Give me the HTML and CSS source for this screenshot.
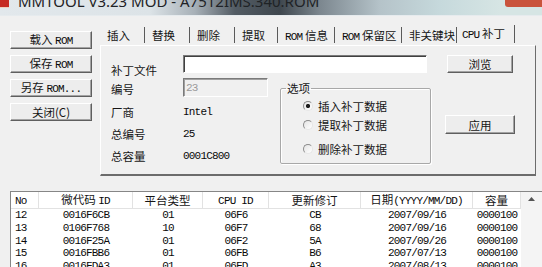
FILE: index.html
```html
<!DOCTYPE html>
<html lang="zh-CN">

<head>
    <meta charset="UTF-8">
    <title>MMTOOL V3.23 MOD - A7512IMS.340.ROM</title>
    <link rel="stylesheet" href="styles.css">
</head>

<body>

    <div class="window">
        <!-- Barra de título -->
        <div class="titlebar">
            <span class="app-icon"></span>
            <span class="title">MMTOOL V3.23 MOD - A7512IMS.340.ROM</span>
            <span class="close-btn"></span>
        </div>

        <div class="client">
            <!-- Botones de la izquierda -->
            <div class="side">
                <button class="btn">载入 <span class="mono">ROM</span></button>
                <button class="btn">保存 <span class="mono">ROM</span></button>
                <button class="btn">另存 <span class="mono">ROM...</span></button>
                <button class="btn">关闭(C)</button>
            </div>

            <!-- Pestañas -->
            <div class="tabs">
                <div class="tab-strip">
                    <div class="tab">插入</div>
                    <div class="tab">替换</div>
                    <div class="tab">删除</div>
                    <div class="tab">提取</div>
                    <div class="tab"><span class="mono">ROM</span> 信息</div>
                    <div class="tab"><span class="mono">ROM</span> 保留区</div>
                    <div class="tab">非关键块</div>
                    <div class="tab active"><span class="mono">CPU</span> 补丁</div>
                </div>

                <div class="tab-panel">
                    <div class="label label-first">补丁文件</div>
                    <input class="field field-file" type="text">
                    <button class="btn btn-browse">浏览</button>

                    <div class="label label-second">编号</div>
                    <input class="field field-num mono" type="text" value="23" disabled>

                    <fieldset class="group">
                        <legend>选项</legend>
                        <div class="radios">
                            <div class="radio"><span class="radio-dot checked"></span>插入补丁数据</div>
                            <div class="radio"><span class="radio-dot"></span>提取补丁数据</div>
                            <div class="radio radio-last"><span class="radio-dot"></span>删除补丁数据</div>
                        </div>
                    </fieldset>

                    <div class="label row-3">厂商</div>
                    <div class="value row-3 mono">Intel</div>
                    <button class="btn btn-apply">应用</button>

                    <div class="label row-4">总编号</div>
                    <div class="value row-4 mono">25</div>

                    <div class="label row-5">总容量</div>
                    <div class="value row-5 mono">0001C800</div>
                </div>
            </div>
        </div>

        <!-- Lista de microcódigos -->
        <div class="list">
            <table class="list-table">
                <colgroup>
                    <col class="c-no">
                    <col class="c-id">
                    <col class="c-plat">
                    <col class="c-cpu">
                    <col class="c-rev">
                    <col class="c-date">
                    <col class="c-size">
                </colgroup>
                <thead>
                    <tr>
                        <th class="left"><span class="mono">No</span></th>
                        <th>微代码 <span class="mono">ID</span></th>
                        <th>平台类型</th>
                        <th><span class="mono">CPU ID</span></th>
                        <th>更新修订</th>
                        <th>日期<span class="mono">(YYYY/MM/DD)</span></th>
                        <th>容量</th>
                    </tr>
                </thead>
                <tbody class="mono">
                    <tr><td class="left">12</td><td>0016F6CB</td><td>01</td><td>06F6</td><td>CB</td><td>2007/09/16</td><td>0000100</td></tr>
                    <tr><td class="left">13</td><td>0106F768</td><td>10</td><td>06F7</td><td>68</td><td>2007/09/16</td><td>0000100</td></tr>
                    <tr><td class="left">14</td><td>0016F25A</td><td>01</td><td>06F2</td><td>5A</td><td>2007/09/26</td><td>0000100</td></tr>
                    <tr><td class="left">15</td><td>0016FBB6</td><td>01</td><td>06FB</td><td>B6</td><td>2007/07/13</td><td>0000100</td></tr>
                    <tr><td class="left">16</td><td>0016FDA3</td><td>01</td><td>06FD</td><td>A3</td><td>2007/08/13</td><td>0000100</td></tr>
                </tbody>
            </table>
            <div class="scrollbar">
                <svg class="scroll-up" width="7" height="4" viewBox="0 0 7 4"><path d="M0 4 L3.5 0 L7 4 Z" fill="#555"/></svg>
            </div>
        </div>
    </div>

</body>

</html>
```

FILE: styles.css
```css
/* Ventana completa */
body {
    margin: 0;
    background-color: #f0f0f0;
    font-family: "Noto Sans CJK SC", "Noto Sans", sans-serif;
    font-size: 11.5px;
    color: #151515;
    overflow: hidden;
}

.window {
    width: 542px;
    height: 267px;
    overflow: hidden;
}

.mono {
    font-family: "Liberation Mono", "Noto Sans CJK SC", monospace;
    font-size: 11px;
    letter-spacing: -0.8px;
    color: #0a0a0a;
}

/* Barra de título (efecto Aero borroso) */
.titlebar {
    height: 15px;
    display: flex;
    align-items: flex-start;
    overflow: hidden;
    background: linear-gradient(90deg, #e2e8ec 0, #dce3e7 150px, #a7b0b7 195px, #535c64 235px, #3f474e 280px, #7c878f 320px, #b5c3c9 380px, #c6d9dc 440px, #d6e5e4 500px);
    border-bottom: 1px solid #e6ebee;
}

.app-icon {
    width: 9px;
    height: 7px;
    background-color: #c62c25;
    border-bottom: 1px solid #f0d0c0;
}

.title {
    margin-top: -6px;
    margin-left: 9px;
    font-family: "Noto Sans", sans-serif;
    font-size: 15px;
    line-height: 15px;
    color: #1f2326;
    white-space: nowrap;
}

.close-btn {
    margin-left: auto;
    width: 37px;
    height: 7px;
    background-color: #c9533c;
    border-bottom-left-radius: 3px;
}

.client {
    display: flex;
}

/* Botones clásicos */
.btn {
    display: block;
    padding: 0;
    background-color: #ededed;
    border: 1px solid;
    border-color: #ffffff #5f5f5f #5f5f5f #ffffff;
    box-shadow: inset -1px -1px #a3a3a3;
    font-family: inherit;
    font-size: 11.5px;
    color: #151515;
    text-align: center;
}

.side {
    width: 82px;
    margin-left: 10px;
    padding-top: 15px;
}

.side .btn {
    width: 82px;
    height: 18px;
    margin-bottom: 6px;
    line-height: 15px;
}

/* Pestañas */
.tabs {
    width: 436px;
    margin-left: 8px;
    margin-top: 9px;
}

.tab-strip {
    height: 20px;
    display: grid;
    grid-template-columns: 45px 45px 45px 43px 57px 67px 55px 58px;
    align-items: end;
}

.tab {
    height: 16px;
    margin-bottom: 2px;
    padding-left: 7px;
    line-height: 16px;
    border-right: 1px solid #5a5a5a;
    white-space: nowrap;
}

.tab.active {
    height: 18px;
    margin-bottom: 2px;
    padding-left: 5px;
    line-height: 17px;
}

.tab-panel {
    height: 131px;
    box-sizing: border-box;
    padding: 9px 0 0 10px;
    border-top: 1px solid #ffffff;
    border-left: 1px solid #ffffff;
    border-right: 1px solid #6c6c6c;
    border-bottom: 2px solid #6c6c6c;
    display: grid;
    grid-template-columns: 72px 97px 151px 14px 70px;
    grid-template-rows: 23px 23px 22px 22px 22px;
}

.label {
    line-height: 14px;
    grid-column: 1;
}

.label-first {
    grid-row: 1;
    padding-top: 8px;
}

.label-second {
    grid-row: 2;
    padding-top: 4px;
}

.row-3 { grid-row: 3; line-height: 22px; }
.row-4 { grid-row: 4; line-height: 22px; }
.row-5 { grid-row: 5; line-height: 22px; }

.value {
    grid-column: 2;
}

/* Campos de texto hundidos */
.field {
    box-sizing: border-box;
    margin: 0;
    padding: 0 2px;
    border: 1px solid;
    border-color: #7a7a7a #ffffff #ffffff #7a7a7a;
    box-shadow: inset 1px 1px #404040;
    background-color: #ffffff;
}

.field-file {
    grid-column: 2 / 4;
    grid-row: 1;
    height: 18px;
    margin-right: 4px;
}

.field-num {
    grid-column: 2;
    grid-row: 2;
    width: 85px;
    height: 19px;
    background-color: #f0f0f0;
    color: #9a9a9a;
    box-shadow: inset 1px 1px #a0a0a0;
}

.btn-browse {
    grid-column: 5;
    grid-row: 1;
    width: 66px;
    height: 18px;
    margin-left: 2px;
}

.btn-apply {
    grid-column: 5;
    grid-row: 3 / 5;
    align-self: start;
    width: 70px;
    height: 19px;
    margin-top: 14px;
}

/* Grupo de opciones */
.group {
    grid-column: 3;
    grid-row: 2 / 6;
    margin: 4px 0 0 0;
    padding: 0;
    height: 82px;
    box-sizing: border-box;
    border: 1px solid #a8a8a8;
    border-radius: 2px;
    box-shadow: inset 1px 1px #ffffff, 1px 1px #ffffff;
    min-width: 0;
}

.group legend {
    margin-left: 5px;
    padding: 0 1px;
    line-height: 12px;
}

.radios {
    padding: 2px 0 0 22px;
}

.radio {
    display: flex;
    align-items: center;
    height: 19px;
    gap: 5px;
}

.radio-last {
    margin-top: 5px;
}

.radio-dot {
    width: 10px;
    height: 10px;
    box-sizing: border-box;
    border-radius: 50%;
    border: 1px solid;
    border-color: #8c8c8c #e6e6e6 #e6e6e6 #8c8c8c;
    background: linear-gradient(135deg, #e4e4e4, #ffffff);
}

.radio-dot.checked {
    background: radial-gradient(circle, #1e1e1e 0, #1e1e1e 1.8px, transparent 2.4px), linear-gradient(135deg, #e4e4e4, #ffffff);
}

/* Lista */
.list {
    display: flex;
    align-items: flex-start;
    margin: 15px 0 0 10px;
    height: 90px;
    background-color: #ffffff;
    border-top: 1px solid #868686;
    border-left: 1px solid #868686;
}

.list-table {
    width: 510px;
    table-layout: fixed;
    border-collapse: separate;
    border-spacing: 0;
}

.c-no { width: 28px; }
.c-id { width: 94px; }
.c-plat { width: 70px; }
.c-cpu { width: 66px; }
.c-rev { width: 92px; }
.c-date { width: 112px; }
.c-size { width: 48px; }

.list-table th {
    height: 14px;
    padding: 0;
    font-weight: normal;
    line-height: 14px;
    border-right: 1px solid #e2e2e2;
    border-bottom: 1px solid #e2e2e2;
    white-space: nowrap;
}

.list-table td {
    height: 12.75px;
    padding: 0;
    line-height: 12.75px;
    text-align: center;
    white-space: nowrap;
}

.list-table .left {
    text-align: left;
    padding-left: 4px;
}

.scrollbar {
    width: 22px;
    height: 90px;
    background-color: #f4f4f4;
    display: flex;
    justify-content: center;
    align-items: flex-start;
    padding-top: 5px;
    box-sizing: border-box;
}
```
